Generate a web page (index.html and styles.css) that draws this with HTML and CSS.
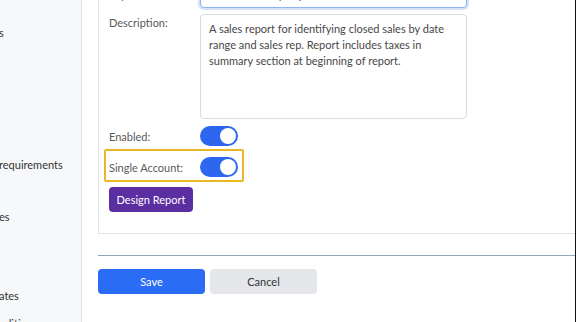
FILE: index.html
```html
<!DOCTYPE html>
<html lang="en">
<head>
<meta charset="utf-8">
<title>Edit Report</title>
<link rel="stylesheet" href="styles.css">
</head>
<body>
<div class="app">
  <aside class="sidebar">
    <div class="nav-item nav-first">s</div>
    <div class="nav-item nav-gap-lg">requirements</div>
    <div class="nav-item nav-gap-sm">es</div>
    <div class="nav-item nav-gap-md">ates</div>
    <div class="nav-item nav-last">nditions</div>
  </aside>
  <main class="main">
    <div class="scroller">
      <section class="card">
        <div class="row row-name">
          <div class="label">Report Name:</div>
          <div class="input focused">Closed Sales by Rep</div>
        </div>
        <div class="row row-desc">
          <div class="label label-top">Description:</div>
          <div class="textarea">A sales report for identifying closed sales by date range and sales rep. Report includes taxes in summary section at beginning of report.</div>
        </div>
        <div class="row row-toggle">
          <div class="label">Enabled:</div>
          <div class="toggle"><span class="knob"></span></div>
        </div>
        <div class="row row-toggle highlighted">
          <div class="label">Single Account:</div>
          <div class="toggle"><span class="knob"></span></div>
        </div>
        <div class="row row-design">
          <button class="btn btn-design">Design Report</button>
        </div>
      </section>
      <hr class="divider">
      <div class="actions">
        <button class="btn btn-save">Save</button>
        <button class="btn btn-cancel">Cancel</button>
      </div>
    </div>
  </main>
</div>
</body>
</html>
```
FILE: styles.css
```css
* { box-sizing: border-box; }
html, body { margin: 0; padding: 0; }
body {
  width: 576px;
  height: 322px;
  overflow: hidden;
  font-family: Lato, "Noto Sans", sans-serif;
  font-size: 11px;
  color: #555;
  background: #fff;
}
.app {
  display: flex;
  width: 576px;
  height: 322px;
  overflow: hidden;
  border-right: 1px solid #111;
}
.sidebar {
  flex: 0 0 82px;
  background: #f7f8f9;
  border-right: 1px solid #dcdfe3;
  overflow: hidden;
  color: #333;
  font-size: 11px;
}
.nav-item {
  height: 22px;
  line-height: 22px;
  white-space: nowrap;
  margin-left: -1px;
}
.nav-first { margin-top: 22px; }
.nav-gap-lg { margin-top: 110px; }
.nav-gap-sm { margin-top: 30px; }
.nav-gap-md { margin-top: 57px; }
.nav-last { margin-top: 6px; }

.main {
  flex: 1;
  overflow: hidden;
  padding-left: 16px;
  background: #fff;
}
.scroller {
  margin-top: -28px;
  width: 520px;
}
.card {
  border-left: 1px solid #e2e5e8;
  border-bottom: 1px solid #e2e5e8;
  padding: 10px 0 21px 10px;
}
.row {
  display: flex;
  align-items: flex-start;
}
.label {
  width: 91px;
  flex: 0 0 91px;
  color: #5a5a5a;
}
.row-name .label { line-height: 26px; }
.input {
  width: 267px;
  height: 26px;
  border: 1px solid #8fb2f3;
  box-shadow: 0 0 0 2px #d3e1fb;
  border-radius: 4px;
  padding: 0 8px;
  line-height: 24px;
  color: #444;
  background: #fff;
}
.row-desc { margin-top: 6px; }
.label-top { padding-top: 2px; }
.textarea {
  width: 267px;
  height: 105px;
  border: 1px solid #d8dbdf;
  border-radius: 4px;
  padding: 6px 8px;
  line-height: 16px;
  color: #474747;
  background: #fff;
}
.row-toggle {
  align-items: center;
  height: 20px;
  margin-top: 7px;
  position: relative;
  width: 129px;
}
.row-toggle + .row-toggle { margin-top: 11px; }
.highlighted::after {
  content: "";
  position: absolute;
  left: -5px;
  right: -6px;
  top: -8px;
  bottom: -5px;
  border: 2px solid #e8b824;
  border-radius: 2px;
  pointer-events: none;
}
.toggle {
  width: 38px;
  height: 20px;
  border-radius: 10px;
  background: #2d66ef;
  position: relative;
  display: flex;
  justify-content: flex-end;
  align-items: center;
  padding-right: 2px;
}
.knob {
  width: 16px;
  height: 16px;
  border-radius: 50%;
  background: #fff;
}
.row-design { margin-top: 10px; }
.btn {
  font-family: Lato, "Noto Sans", sans-serif;
  font-size: 11px;
  border: none;
  border-radius: 4px;
  cursor: pointer;
}
.btn-design {
  height: 25px;
  width: 84px;
  padding: 0;
  background: #5b2fa2;
  color: #fff;
}
.divider {
  border: none;
  border-top: 1px solid #8ea7b6;
  margin: 21px 0 0 0;
  height: 0;
}
.actions {
  display: flex;
  gap: 5px;
  margin-top: 13px;
}
.btn-save, .btn-cancel {
  width: 107px;
  height: 25px;
  padding: 0;
}
.btn-save { background: #2b6cf5; color: #fff; }
.btn-cancel { background: #e4e6ea; color: #333; }
```
